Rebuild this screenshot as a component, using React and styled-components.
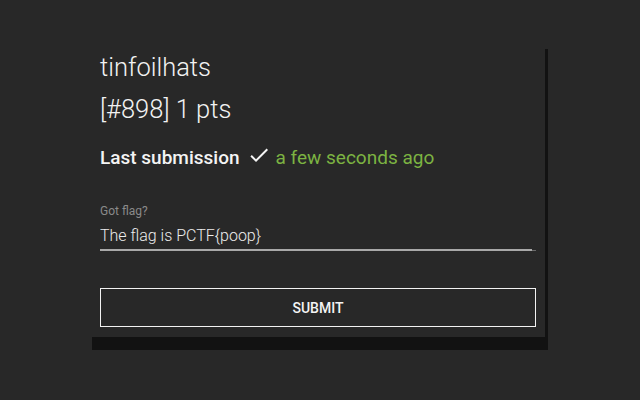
import React from "react";
import styled, { createGlobalStyle } from "styled-components";
import { MdCheck } from "react-icons/md";

const Global = createGlobalStyle`
  html, body { margin: 0; padding: 0; background: #282828; }
  body { font-family: Roboto, "Liberation Sans", sans-serif; color: #f0f0f0; }
  * { box-sizing: border-box; }
`;

const Page = styled.div`
  width: 640px;
  height: 400px;
  padding: 36px 0 0 89px;
`;

const Card = styled.div`
  width: 456px;
  height: 301px;
  background: #282828;
  box-shadow: 3px 13px 0 0 #121212;
  padding: 15px 9px 10px 11px;
  display: flex;
  flex-direction: column;
`;

const Title = styled.div`
  font-size: 25.5px;
  font-weight: 300;
  line-height: 32px;
  color: #f2f2f2;
  margin-top: ${(p) => p.$mt || 0}px;
`;

const StatusRow = styled.div`
  display: flex;
  align-items: center;
  margin-top: 20px;
  height: 25px;
  font-size: 19px;
  line-height: 25px;
`;

const Strong = styled.span`
  font-weight: 500;
  color: #f4f4f4;
`;

const CheckIcon = styled(MdCheck)`
  width: 24px;
  height: 24px;
  margin: -6px 5px 0 7px;
  color: #f4f4f4;
`;

const Ago = styled.span`
  color: #7cb342;
  font-weight: 400;
`;

const Field = styled.div`
  margin-top: 33px;
  display: flex;
  flex-direction: column;
`;

const Label = styled.label`
  font-size: 12px;
  line-height: 16px;
  color: #8a8a8a;
`;

const Input = styled.input`
  margin-top: 6px;
  width: 100%;
  border: none;
  outline: none;
  background:
    linear-gradient(#a9a9a9, #a9a9a9) left bottom / calc(100% - 4px) 2px no-repeat,
    linear-gradient(#6a6a6a, #6a6a6a) left bottom / 100% 1px no-repeat,
    transparent;
  padding: 0 0 5px 0;
  font-family: Roboto, "Liberation Sans", sans-serif;
  font-size: 16px;
  font-weight: 300;
  line-height: 20px;
  height: 26px;
  color: #ececec;
`;

const Spacer = styled.div`
  flex: 1;
`;

const Button = styled.button`
  width: 436px;
  height: 39px;
  background: transparent;
  border: 1px solid #f2f2f2;
  color: #f4f4f4;
  font-family: Roboto, "Liberation Sans", sans-serif;
  font-size: 14px;
  font-weight: 500;
  text-transform: uppercase;
  padding: 0;
`;

export default function App() {
  return (
    <>
      <Global />
      <Page>
        <Card>
          <Title>tinfoilhats</Title>
          <Title $mt={10}>[#898] 1 pts</Title>
          <StatusRow>
            <Strong>Last submission</Strong>
            <CheckIcon />
            <Ago>a few seconds ago</Ago>
          </StatusRow>
          <Field>
            <Label>Got flag?</Label>
            <Input defaultValue="The flag is PCTF{poop}" />
          </Field>
          <Spacer />
          <Button>Submit</Button>
        </Card>
      </Page>
    </>
  );
}
